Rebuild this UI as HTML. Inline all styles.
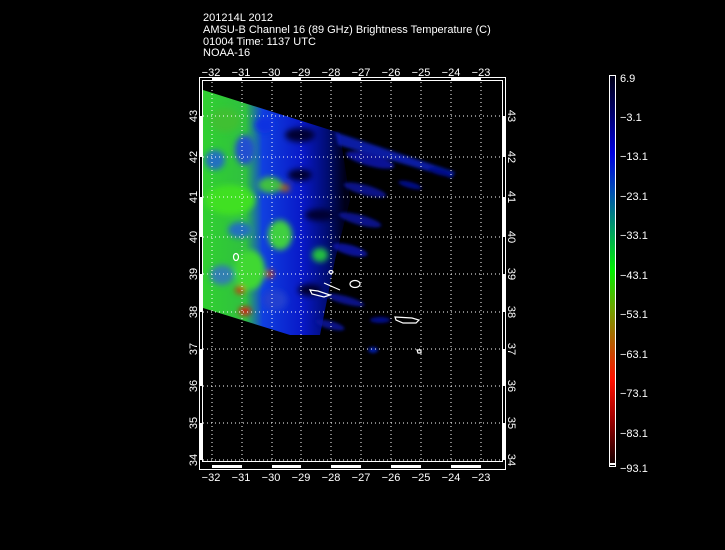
<!DOCTYPE html>
<html><head><meta charset="utf-8"><style>
html,body{margin:0;padding:0;background:#000;width:725px;height:550px;overflow:hidden}
svg{display:block}
text{font-family:"Liberation Sans",sans-serif;fill:#fff;font-size:11px}
</style></head><body>
<svg width="725" height="550" viewBox="0 0 725 550">
<defs>
<linearGradient id="cb" x1="0" y1="0" x2="0" y2="1">
<stop offset="0" stop-color="#000018"/>
<stop offset="0.1" stop-color="#000070"/>
<stop offset="0.2" stop-color="#0000e0"/>
<stop offset="0.3" stop-color="#0050b0"/>
<stop offset="0.4" stop-color="#00a060"/>
<stop offset="0.5" stop-color="#00f000"/>
<stop offset="0.6" stop-color="#70a000"/>
<stop offset="0.7" stop-color="#c05000"/>
<stop offset="0.78" stop-color="#ff1000"/>
<stop offset="0.88" stop-color="#a00000"/>
<stop offset="1" stop-color="#100000"/>
</linearGradient>
<linearGradient id="sw" x1="203" y1="0" x2="345" y2="0" gradientUnits="userSpaceOnUse">
<stop offset="0" stop-color="#30d030"/>
<stop offset="0.3" stop-color="#30c040"/>
<stop offset="0.42" stop-color="#1040e0"/>
<stop offset="0.7" stop-color="#0818c8"/>
<stop offset="0.88" stop-color="#000c70"/>
<stop offset="1" stop-color="#000018"/>
</linearGradient>
<filter id="bl"><feGaussianBlur stdDeviation="3"/></filter>
<filter id="bl2"><feGaussianBlur stdDeviation="1.5"/></filter>
<clipPath id="cp"><polygon points="203,90 340,133 350,200 335,260 320,335 290,335 203,308"/></clipPath>
</defs>

<!-- swath -->
<polygon points="203,90 340,133 350,200 335,260 320,335 290,335 203,308" fill="url(#sw)"/>
<g clip-path="url(#cp)" filter="url(#bl)">
<ellipse cx="225" cy="120" rx="15" ry="12" fill="#40c030"/>
<ellipse cx="215" cy="160" rx="10" ry="10" fill="#2070c0"/>
<ellipse cx="245" cy="150" rx="10" ry="15" fill="#2050d0"/>
<ellipse cx="230" cy="200" rx="25" ry="15" fill="#40e020"/>
<ellipse cx="240" cy="230" rx="12" ry="8" fill="#2070c0"/>
<ellipse cx="222" cy="275" rx="12" ry="10" fill="#3080b0"/>
<ellipse cx="250" cy="270" rx="15" ry="20" fill="#40d830"/>
<ellipse cx="270" cy="185" rx="12" ry="8" fill="#40c040"/>
<ellipse cx="280" cy="235" rx="12" ry="15" fill="#40d040"/>
<ellipse cx="245" cy="311" rx="6" ry="4" fill="#e01010"/>
<ellipse cx="270" cy="274" rx="4" ry="4" fill="#c04010"/>
<ellipse cx="240" cy="290" rx="5" ry="4" fill="#c04010"/>
<ellipse cx="285" cy="188" rx="5" ry="4" fill="#a06020"/>
<ellipse cx="275" cy="300" rx="12" ry="10" fill="#2040d0"/>
<ellipse cx="265" cy="125" rx="10" ry="8" fill="#1030e0"/>
<ellipse cx="320" cy="255" rx="8" ry="7" fill="#20c040"/>
<ellipse cx="300" cy="135" rx="15" ry="7" fill="#000030"/>
<ellipse cx="300" cy="175" rx="12" ry="6" fill="#000030"/>
<ellipse cx="320" cy="215" rx="15" ry="6" fill="#000030"/>
<ellipse cx="310" cy="290" rx="12" ry="6" fill="#000030"/>
</g>
<!-- streaks -->
<g filter="url(#bl2)" opacity="0.85">
<polygon points="335,132 455,172 452,178 338,145" fill="#0820c0"/>
<ellipse cx="370" cy="160" rx="25" ry="6" fill="#0818b0" transform="rotate(15 370 160)"/>
<ellipse cx="365" cy="190" rx="22" ry="5" fill="#0818a0" transform="rotate(15 365 190)"/>
<ellipse cx="360" cy="220" rx="22" ry="5" fill="#0818a0" transform="rotate(15 360 220)"/>
<ellipse cx="350" cy="250" rx="18" ry="5" fill="#0818b0" transform="rotate(15 350 250)"/>
<ellipse cx="345" cy="300" rx="20" ry="4" fill="#0818a0" transform="rotate(15 345 300)"/>
<ellipse cx="330" cy="325" rx="15" ry="4" fill="#0818a0" transform="rotate(15 330 325)"/>
<ellipse cx="410" cy="185" rx="12" ry="3" fill="#0010a0" transform="rotate(15 410 185)"/>
<ellipse cx="380" cy="320" rx="10" ry="3" fill="#0010a0"/>
<ellipse cx="373" cy="350" rx="5" ry="3" fill="#0020c0"/>
<ellipse cx="440" cy="172" rx="12" ry="3" fill="#0010a0" transform="rotate(15 440 172)"/>
</g>
<!-- contours -->
<g fill="none" stroke="#fff" stroke-width="1.2">
<ellipse cx="236" cy="257" rx="2.5" ry="3.5"/>
<ellipse cx="355" cy="284" rx="5" ry="3.5"/>
<path d="M395,317 L412,318 L419,320 L416,323 L403,323 L396,320Z"/>
<path d="M310,290 L318,291 L330,295 L324,297 L312,294Z"/>
<path d="M324,283 L340,290"/>
<ellipse cx="331" cy="272" rx="2" ry="1.5"/>
<path d="M417,350 h4 v3 h-3z"/>
</g>

<!-- grid -->
<g stroke="#fff" stroke-width="1" stroke-dasharray="1,3">
<line x1="212" y1="82" x2="212" y2="461"/><line x1="242" y1="82" x2="242" y2="461"/>
<line x1="272" y1="82" x2="272" y2="461"/><line x1="301" y1="82" x2="301" y2="461"/>
<line x1="331" y1="82" x2="331" y2="461"/><line x1="361" y1="82" x2="361" y2="461"/>
<line x1="391" y1="82" x2="391" y2="461"/><line x1="421" y1="82" x2="421" y2="461"/>
<line x1="451" y1="82" x2="451" y2="461"/><line x1="481" y1="82" x2="481" y2="461"/>
<line x1="203" y1="460" x2="502" y2="460"/><line x1="203" y1="423" x2="502" y2="423"/>
<line x1="203" y1="386" x2="502" y2="386"/><line x1="203" y1="349" x2="502" y2="349"/>
<line x1="203" y1="312" x2="502" y2="312"/><line x1="203" y1="274" x2="502" y2="274"/>
<line x1="203" y1="237" x2="502" y2="237"/><line x1="203" y1="197" x2="502" y2="197"/>
<line x1="203" y1="157" x2="502" y2="157"/><line x1="203" y1="116" x2="502" y2="116"/>
</g>
<!-- frame -->
<g fill="none" stroke="#fff" stroke-width="1">
<rect x="199.5" y="77.5" width="306" height="392"/>
<rect x="202.5" y="80.5" width="300" height="381"/>
</g>
<g fill="#fff">
<rect x="212" y="465" width="30" height="3"/><rect x="272" y="465" width="29" height="3"/>
<rect x="331" y="465" width="30" height="3"/><rect x="391" y="465" width="30" height="3"/>
<rect x="451" y="465" width="30" height="3"/>
<rect x="212" y="78" width="30" height="3"/><rect x="272" y="78" width="29" height="3"/>
<rect x="331" y="78" width="30" height="3"/><rect x="391" y="78" width="30" height="3"/>
<rect x="451" y="78" width="30" height="3"/>
<rect x="200" y="423" width="2" height="37"/><rect x="200" y="349" width="2" height="37"/>
<rect x="200" y="274" width="2" height="38"/><rect x="200" y="197" width="2" height="40"/>
<rect x="200" y="116" width="2" height="41"/>
<rect x="503" y="423" width="2" height="37"/><rect x="503" y="349" width="2" height="37"/>
<rect x="503" y="274" width="2" height="38"/><rect x="503" y="197" width="2" height="40"/>
<rect x="503" y="116" width="2" height="41"/>
</g>

<!-- titles -->
<text x="203" y="21">201214L 2012</text>
<text x="203" y="33">AMSU-B Channel 16 (89 GHz) Brightness Temperature (C)</text>
<text x="203" y="45">01004 Time: 1137 UTC</text>
<text x="203" y="56">NOAA-16</text>

<!-- x labels -->
<g text-anchor="middle">
<text x="211" y="76">−32</text><text x="241" y="76">−31</text><text x="271" y="76">−30</text>
<text x="301" y="76">−29</text><text x="331" y="76">−28</text><text x="361" y="76">−27</text>
<text x="391" y="76">−26</text><text x="421" y="76">−25</text><text x="451" y="76">−24</text>
<text x="481" y="76">−23</text>
<text x="211" y="481">−32</text><text x="241" y="481">−31</text><text x="271" y="481">−30</text>
<text x="301" y="481">−29</text><text x="331" y="481">−28</text><text x="361" y="481">−27</text>
<text x="391" y="481">−26</text><text x="421" y="481">−25</text><text x="451" y="481">−24</text>
<text x="481" y="481">−23</text>
</g>
<!-- y labels -->
<g text-anchor="middle">
<text transform="translate(197,460) rotate(-90)">34</text>
<text transform="translate(197,423) rotate(-90)">35</text>
<text transform="translate(197,386) rotate(-90)">36</text>
<text transform="translate(197,349) rotate(-90)">37</text>
<text transform="translate(197,312) rotate(-90)">38</text>
<text transform="translate(197,274) rotate(-90)">39</text>
<text transform="translate(197,237) rotate(-90)">40</text>
<text transform="translate(197,197) rotate(-90)">41</text>
<text transform="translate(197,157) rotate(-90)">42</text>
<text transform="translate(197,116) rotate(-90)">43</text>
<text transform="translate(508,460) rotate(90)">34</text>
<text transform="translate(508,423) rotate(90)">35</text>
<text transform="translate(508,386) rotate(90)">36</text>
<text transform="translate(508,349) rotate(90)">37</text>
<text transform="translate(508,312) rotate(90)">38</text>
<text transform="translate(508,274) rotate(90)">39</text>
<text transform="translate(508,237) rotate(90)">40</text>
<text transform="translate(508,197) rotate(90)">41</text>
<text transform="translate(508,157) rotate(90)">42</text>
<text transform="translate(508,116) rotate(90)">43</text>
</g>

<!-- colorbar -->
<rect x="610" y="76" width="5" height="389" fill="url(#cb)"/>
<rect x="609.5" y="75.5" width="6" height="391" fill="none" stroke="#fff"/>
<rect x="610" y="463" width="5" height="2" fill="#fff"/>
<g>
<text x="620" y="82">6.9</text>
<text x="620" y="121">−3.1</text>
<text x="620" y="160">−13.1</text>
<text x="620" y="200">−23.1</text>
<text x="620" y="239">−33.1</text>
<text x="620" y="279">−43.1</text>
<text x="620" y="318">−53.1</text>
<text x="620" y="358">−63.1</text>
<text x="620" y="397">−73.1</text>
<text x="620" y="437">−83.1</text>
<text x="620" y="472">−93.1</text>
</g>
</svg>
</body></html>
